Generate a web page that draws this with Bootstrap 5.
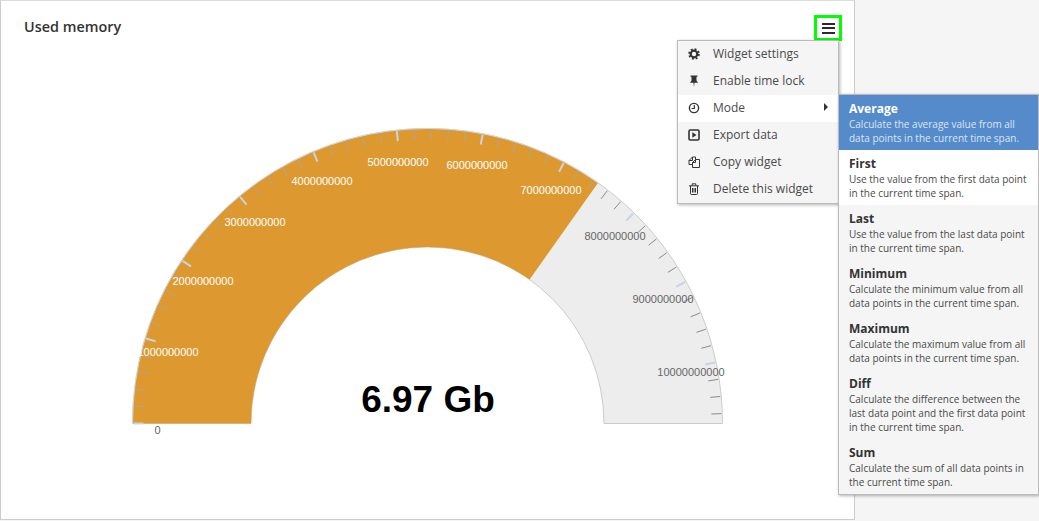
<!DOCTYPE html>
<html lang="en">
<head>
  <meta charset="UTF-8">
  <title>Used memory</title>
  <link href="https://cdn.jsdelivr.net/npm/bootstrap@5.3.3/dist/css/bootstrap.min.css" rel="stylesheet">
  <style>
    body {
      background: #f5f5f5;
      font-family: "Open Sans", sans-serif;
      color: #333;
      height: 521px;
      overflow: hidden;
    }
    .widget-panel {
      width: 855px;
      height: 520px;
      background: #fff;
      border: 1px solid #ccc;
      border-top-color: #ddd;
    }
    .widget-title {
      font-size: 14.4px;
      font-weight: 600;
      line-height: 20px;
      padding: 16px 0 0 23px;
      margin: 0;
    }
    .menu-toggle {
      position: absolute;
      left: 814px;
      top: 15px;
      width: 28px;
      height: 26px;
      border: 3px solid #00ff00;
      background: #fff;
      padding: 0;
    }
    .menu-toggle span {
      display: block;
      width: 13px;
      height: 2px;
      background: #2b2b2b;
      margin: 1.25px auto;
    }
    .gauge-svg {
      position: absolute;
      left: 0;
      top: 0;
    }
    .gauge-svg text {
      font-family: "Liberation Sans", Arial, sans-serif;
      font-size: 11px;
      text-anchor: middle;
    }
    .gauge-svg .gauge-value {
      font-size: 37px;
      font-weight: 700;
      fill: #000;
    }
    .widget-menu, .mode-menu {
      display: block;
      position: absolute;
      background: #f5f5f5;
      border: 1px solid #bbb;
      border-radius: 0;
      box-shadow: 1px 1px 3px rgba(0,0,0,0.3);
      padding: 0;
      min-width: 0;
    }
    .widget-menu {
      left: 677px;
      top: 40px;
      width: 162px;
      height: 164px;
    }
    .mode-menu {
      left: 838px;
      top: 94px;
      width: 201px;
      height: 401px;
    }
    .widget-menu .dropdown-item {
      display: flex;
      align-items: center;
      height: 27px;
      padding: 0 0 2px 10px;
      font-size: 12px;
      color: #4a4a4a;
    }
    .widget-menu .dropdown-item.is-open {
      background: #fff;
      position: relative;
    }
    .menu-icon {
      width: 12px;
      height: 12px;
      margin-right: 13px;
      flex: none;
    }
    .sub-caret {
      position: absolute;
      right: 10px;
      top: 8px;
      border-left: 4px solid #333;
      border-top: 4px solid transparent;
      border-bottom: 4px solid transparent;
    }
    .mode-item {
      padding: 6px 10px 0;
      height: 55px;
      font-size: 10px;
      line-height: 14px;
      color: #4a4a4a;
    }
    .mode-item.tall {
      height: 69px;
    }
    .mode-item strong {
      display: block;
      font-size: 12px;
      font-weight: 700;
      line-height: 16px;
      color: #333;
    }
    .mode-item.active-mode {
      background: #558bca;
      color: #dbe6f3;
    }
    .mode-item.active-mode strong {
      color: #fff;
    }
    .mode-item.plain-mode {
      background: #fff;
    }
  </style>
</head>
<body>

  <div class="widget-panel position-relative">
    <h2 class="widget-title">Used memory</h2>
    <svg class="gauge-svg" id="gauge" width="855" height="519" viewBox="1 1 855 519"></svg>
  </div>

  <button class="menu-toggle d-flex flex-column justify-content-center" type="button"><span></span><span></span><span></span></button>

  <div class="dropdown-menu widget-menu">
    <a class="dropdown-item" href="#">
      <svg class="menu-icon" viewBox="0 0 12 12"><circle cx="6" cy="6" r="3.300" fill="none" stroke="#333" stroke-width="2.200"/><circle cx="6" cy="6" r="4.900" fill="none" stroke="#333" stroke-width="1.800" stroke-dasharray="1.900 1.950"/></svg>
      Widget settings
    </a>
    <a class="dropdown-item" href="#">
      <svg class="menu-icon" viewBox="0 0 12 12"><path fill="#333" d="M2.500.5h7v1.200H8.500V5.500L10 7.800H6.500L6 12 5.500 7.800H2L3.500 5.500V1.700H2.500z"/></svg>
      Enable time lock
    </a>
    <a class="dropdown-item is-open" href="#">
      <svg class="menu-icon" viewBox="0 0 12 12"><circle cx="6" cy="6" r="4.600" fill="none" stroke="#333" stroke-width="1.400"/><path fill="none" stroke="#333" stroke-width="1.200" d="M6.300 3V6.500H3.500"/></svg>
      Mode
      <span class="sub-caret"></span>
    </a>
    <a class="dropdown-item" href="#">
      <svg class="menu-icon" viewBox="0 0 12 12"><rect x="1" y="1" width="10" height="10" rx="1.200" fill="none" stroke="#333" stroke-width="1.600"/><path fill="#333" d="M4.300 3.200 8.500 6 4.300 8.800z"/></svg>
      Export data
    </a>
    <a class="dropdown-item" href="#">
      <svg class="menu-icon" viewBox="0 0 12 12"><path fill="none" stroke="#333" stroke-linejoin="round" d="M4.500 8.500H1V4.500L4.500 1H7.500V3.500M4.500 1V4.500H1M7.500 3.500H11.500V11.500H4.500V6.500ZM7.500 3.500V6.500H4.500"/></svg>
      Copy widget
    </a>
    <a class="dropdown-item" href="#">
      <svg class="menu-icon" viewBox="0 0 12 12"><path fill="none" stroke="#333" d="M2.500 3V10.500a1 1 0 0 0 1 1h5a1 1 0 0 0 1-1V3M1 2.800h10M4.200 2.800V.8h3.600v2M4.500 5v4.500M6 5v4.500M7.500 5v4.500"/></svg>
      Delete this widget
    </a>
  </div>

  <div class="dropdown-menu mode-menu">
    <div class="mode-item active-mode"><strong>Average</strong>Calculate the average value from all<br>data points in the current time span.</div>
    <div class="mode-item plain-mode"><strong>First</strong>Use the value from the first data point<br>in the current time span.</div>
    <div class="mode-item"><strong>Last</strong>Use the value from the last data point<br>in the current time span.</div>
    <div class="mode-item"><strong>Minimum</strong>Calculate the minimum value from all<br>data points in the current time span.</div>
    <div class="mode-item"><strong>Maximum</strong>Calculate the maximum value from all<br>data points in the current time span.</div>
    <div class="mode-item tall"><strong>Diff</strong>Calculate the difference between the<br>last data point and the first data point<br>in the current time span.</div>
    <div class="mode-item"><strong>Sum</strong>Calculate the sum of all data points in<br>the current time span.</div>
  </div>

  <script>
    // gauge: 0 .. 10.71e9 over a half circle
    const cx = 427.5, cy = 423.5, rOut = 295, rIn = 176.5;
    const maxVal = 10.714;
    const val = 7.46;
    const pt = (v, r) => {
      const a = Math.PI * (1 - v / maxVal);
      return [(cx + r * Math.cos(a)).toFixed(2), (cy - r * Math.sin(a)).toFixed(2)];
    };
    const band = (from, to, fill, stroke) => {
      const a = pt(from, rOut), b = pt(to, rOut), c = pt(to, rIn), d = pt(from, rIn);
      return `<path d="M${a} A${rOut} ${rOut} 0 0 1 ${b} L${c} A${rIn} ${rIn} 0 0 0 ${d} Z" fill="${fill}" stroke="${stroke}"/>`;
    };
    const rim = pt(val, rOut);
    let out = band(0, maxVal, '#ededed', '#ccc') + band(0, val, '#dd9930', 'none');
    out += `<path d="M${pt(0, rOut)} A${rOut} ${rOut} 0 0 1 ${rim}" fill="none" stroke="#d4d8de"/>`;

    for (let i = 0; i * 0.2 <= maxVal; i++) {
      const v = i * 0.2, major = i % 5 === 0;
      const a = pt(v, rOut - 1), b = pt(v, rOut - 11);
      let col = major ? '#c6d4e6' : (v < val ? '#b0a590' : '#8a8a8a');
      out += `<line x1="${a[0]}" y1="${a[1]}" x2="${b[0]}" y2="${b[1]}" stroke="${col}" stroke-width="${major ? 2 : 1}"/>`;
    }

    const labels = [
      ['0', 157.5, 434, '#666'], ['1000000000', 168, 356, '#fff'], ['2000000000', 203, 285, '#fff'],
      ['3000000000', 255, 226, '#fff'], ['4000000000', 322, 185, '#fff'], ['5000000000', 398, 166, '#fff'],
      ['6000000000', 477, 169, '#fff'], ['7000000000', 551, 194, '#fff'], ['8000000000', 615, 240, '#666'],
      ['9000000000', 663, 303, '#666'], ['10000000000', 691, 376, '#666']
    ];
    labels.forEach(l => {
      out += `<text x="${l[1]}" y="${l[2]}" fill="${l[3]}">${l[0]}</text>`;
    });
    out += `<text class="gauge-value" x="428" y="412">6.97 Gb</text>`;
    document.getElementById('gauge').innerHTML = out;
  </script>
  <script src="https://cdn.jsdelivr.net/npm/bootstrap@5.3.3/dist/js/bootstrap.bundle.min.js"></script>
</body>
</html>
